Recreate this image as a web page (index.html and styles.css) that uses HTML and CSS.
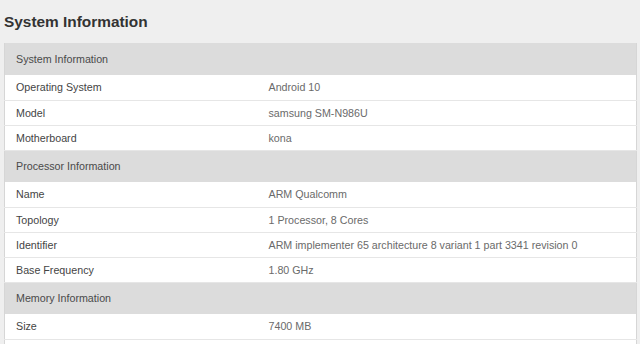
FILE: index.html
```html
<!DOCTYPE html>
<html>
<head>
<meta charset="utf-8">
<link rel="stylesheet" href="styles.css">
</head>
<body>
<h1 class="title">System Information</h1>
<table class="info">
  <colgroup><col class="c-key"><col class="c-val"></colgroup>
  <tr class="head"><th colspan="2">System Information</th></tr>
  <tr><td class="k">Operating System</td><td class="v">Android 10</td></tr>
  <tr><td class="k">Model</td><td class="v">samsung SM-N986U</td></tr>
  <tr><td class="k">Motherboard</td><td class="v">kona</td></tr>
  <tr class="head"><th colspan="2">Processor Information</th></tr>
  <tr><td class="k">Name</td><td class="v">ARM Qualcomm</td></tr>
  <tr><td class="k">Topology</td><td class="v">1 Processor, 8 Cores</td></tr>
  <tr><td class="k">Identifier</td><td class="v">ARM implementer 65 architecture 8 variant 1 part 3341 revision 0</td></tr>
  <tr><td class="k">Base Frequency</td><td class="v">1.80 GHz</td></tr>
  <tr class="head"><th colspan="2">Memory Information</th></tr>
  <tr><td class="k">Size</td><td class="v">7400 MB</td></tr>
  <tr><td class="k">&nbsp;</td><td class="v">&nbsp;</td></tr>
</table>
</body>
</html>
```
FILE: styles.css
```css
html, body {
  margin: 0;
  padding: 0;
  background: #efefef;
  font-family: "Liberation Sans", Arial, sans-serif;
  overflow: hidden;
}
.title {
  margin: 0;
  padding: 13px 0 0 4px;
  height: 30px;
  box-sizing: content-box;
  font-size: 15.4px;
  line-height: 18px;
  font-weight: bold;
  color: #333;
}
.info {
  margin: 0 0 0 4px;
  width: 633px;
  border-collapse: collapse;
  border-left: 1px solid #d6d6d6;
  border-right: 1px solid #d6d6d6;
  table-layout: fixed;
}
.c-key {
  width: 253px;
}
.info th {
  background: #dcdcdc;
  height: 32px;
  padding: 0 11px;
  text-align: left;
  font-weight: normal;
  font-size: 10.7px;
  color: #4a4a4a;
  box-sizing: border-box;
}
.info td {
  background: #fff;
  height: 25px;
  padding: 0 11px;
  font-size: 10.7px;
  border-bottom: 1px solid #e6e6e6;
  box-sizing: border-box;
  white-space: nowrap;
}
.info td.k {
  color: #444;
}
.info td.v {
  color: #6a6a6a;
}
```
